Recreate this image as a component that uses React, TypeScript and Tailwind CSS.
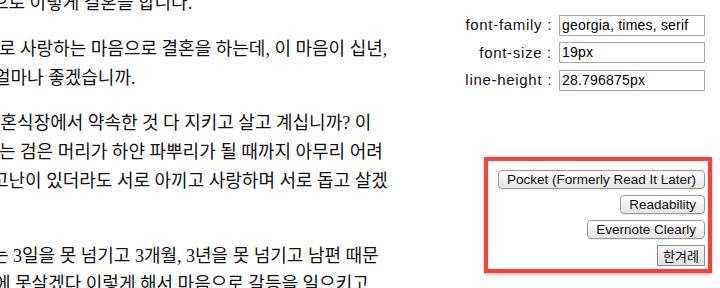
import React from "react";

const paragraphs: { text: string; cls: string }[][] = [
  [{ text: "으로 이렇게 결혼을 합니다.", cls: "-ml-[8px]" }],
  [
    { text: "로 사랑하는 마음으로 결혼을 하는데, 이 마음이 십년,", cls: "-ml-[1px]" },
    { text: "얼마나 좋겠습니까.", cls: "-ml-[6px]" },
  ],
  [
    { text: "결혼식장에서 약속한 것 다 지키고 살고 계십니까? 이", cls: "-ml-[16px]" },
    { text: "는 검은 머리가 하얀 파뿌리가 될 때까지 아무리 어려", cls: "-ml-[1px]" },
    { text: "고난이 있더라도 서로 아끼고 사랑하며 서로 돕고 살겠", cls: "-ml-[8px]" },
    { text: "", cls: "" },
  ],
  [
    { text: "는 3일을 못 넘기고 3개월, 3년을 못 넘기고 남편 때문", cls: "-ml-[8px]" },
    { text: "에 못살겠다 이렇게 해서 마음으로 갈등을 일으키고", cls: "-ml-[6px]" },
  ],
];

const settings = [
  { label: "font-family :", value: "georgia, times, serif" },
  { label: "font-size :", value: "19px" },
  { label: "line-height :", value: "28.796875px" },
];

const readers = ["Pocket (Formerly Read It Later)", "Readability", "Evernote Clearly"];

export default function App() {
  return (
    <div className="flex w-[720px] h-[288px] overflow-hidden bg-white text-[#111]">
      {/* article column, cut off on the left like the original page */}
      <div className="w-[440px] shrink-0 overflow-hidden">
        <div
          className="-mt-[11px] flex flex-col gap-[17px] text-[18px] leading-[28.8px]"
          style={{ fontFamily: '"Liberation Serif", "Noto Sans CJK KR", serif' }}
        >
          {paragraphs.map((p, i) => (
            <div key={i}>
              {p.map((line, j) => (
                <div key={j} className={`h-[28.8px] whitespace-nowrap ${line.cls}`}>
                  {line.text}
                </div>
              ))}
            </div>
          ))}
        </div>
      </div>

      <div className="flex flex-col items-start" style={{ fontFamily: '"Liberation Sans", Arial, sans-serif' }}>
        <div className="mt-[14px] flex flex-col gap-[5px]">
          {settings.map((s) => (
            <div key={s.label} className="flex items-center gap-[7px]">
              <div className="w-[112px] text-right text-[15px] tracking-[0.7px] text-[#111]">{s.label}</div>
              <input
                readOnly
                value={s.value}
                className="w-[146px] h-[21px] border border-[#a9a9a9] bg-white px-[2px] text-[14px] tracking-[0.2px] text-black outline-none"
              />
            </div>
          ))}
        </div>

        <div className="mt-[65px] ml-[44px] w-[228px] h-[116px] border-4 border-[#fd3f3a] bg-white pt-[9px] pr-[3px] shadow-[0_2px_3px_rgba(0,0,0,0.25)]">
          <div className="flex flex-col items-end gap-[6px]">
            {readers.map((r) => (
              <button
                key={r}
                className="h-[19px] rounded-[4px] border border-[#9a9a9a] bg-gradient-to-b from-white to-[#e4e4e4] px-[8px] text-[13.5px] leading-[17px] text-[#111] shadow-[0_1px_0_rgba(0,0,0,0.08)]"
              >
                {r}
              </button>
            ))}
            <button
              className="h-[21px] border border-[#8c8c8c] bg-gradient-to-b from-[#f6f6f6] to-[#e2e2e2] px-[5px] text-[13px] leading-[19px] text-[#111]"
              style={{ fontFamily: '"Noto Sans CJK KR", sans-serif' }}
            >
              한겨례
            </button>
          </div>
        </div>
      </div>
    </div>
  );
}
